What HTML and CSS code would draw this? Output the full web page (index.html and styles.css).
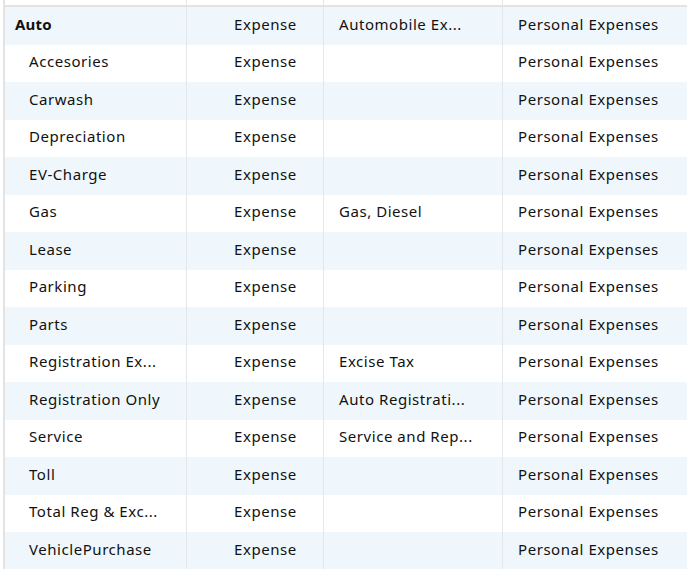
FILE: index.html
```html
<!DOCTYPE html>
<html>
<head>
<meta charset="utf-8">
<link rel="stylesheet" href="styles.css">
</head>
<body>
<div class="grid">
  <div class="head"><div class="hc"></div><div class="hc"></div><div class="hc"></div><div class="hc last"></div></div>
  <div class="row alt"><div class="c c1 parent">Auto</div><div class="c c2">Expense</div><div class="c c3">Automobile Ex...</div><div class="c c4">Personal Expenses</div></div>
  <div class="row"><div class="c c1">Accesories</div><div class="c c2">Expense</div><div class="c c3"></div><div class="c c4">Personal Expenses</div></div>
  <div class="row alt"><div class="c c1">Carwash</div><div class="c c2">Expense</div><div class="c c3"></div><div class="c c4">Personal Expenses</div></div>
  <div class="row"><div class="c c1">Depreciation</div><div class="c c2">Expense</div><div class="c c3"></div><div class="c c4">Personal Expenses</div></div>
  <div class="row alt"><div class="c c1">EV-Charge</div><div class="c c2">Expense</div><div class="c c3"></div><div class="c c4">Personal Expenses</div></div>
  <div class="row"><div class="c c1">Gas</div><div class="c c2">Expense</div><div class="c c3">Gas, Diesel</div><div class="c c4">Personal Expenses</div></div>
  <div class="row alt"><div class="c c1">Lease</div><div class="c c2">Expense</div><div class="c c3"></div><div class="c c4">Personal Expenses</div></div>
  <div class="row"><div class="c c1">Parking</div><div class="c c2">Expense</div><div class="c c3"></div><div class="c c4">Personal Expenses</div></div>
  <div class="row alt"><div class="c c1">Parts</div><div class="c c2">Expense</div><div class="c c3"></div><div class="c c4">Personal Expenses</div></div>
  <div class="row"><div class="c c1">Registration Ex...</div><div class="c c2">Expense</div><div class="c c3">Excise Tax</div><div class="c c4">Personal Expenses</div></div>
  <div class="row alt"><div class="c c1">Registration Only</div><div class="c c2">Expense</div><div class="c c3">Auto Registrati...</div><div class="c c4">Personal Expenses</div></div>
  <div class="row"><div class="c c1">Service</div><div class="c c2">Expense</div><div class="c c3">Service and Rep...</div><div class="c c4">Personal Expenses</div></div>
  <div class="row alt"><div class="c c1">Toll</div><div class="c c2">Expense</div><div class="c c3"></div><div class="c c4">Personal Expenses</div></div>
  <div class="row"><div class="c c1">Total Reg &amp; Exc...</div><div class="c c2">Expense</div><div class="c c3"></div><div class="c c4">Personal Expenses</div></div>
  <div class="row alt"><div class="c c1">VehiclePurchase</div><div class="c c2">Expense</div><div class="c c3"></div><div class="c c4">Personal Expenses</div></div>
</div>
</body>
</html>
```
FILE: styles.css
```css
html, body {
  margin: 0;
  padding: 0;
  background: #ffffff;
  overflow: hidden;
}
body {
  font-family: "Noto Sans", "Open Sans", sans-serif;
  font-size: 15px;
  letter-spacing: 0.55px;
  color: #111111;
}
.grid {
  margin-left: 3px;
  border-left: 2px solid #e3e3e3;
}
.head, .row {
  display: grid;
  grid-template-columns: 182px 137px 179px 1fr;
}
.head {
  height: 5px;
  border-bottom: 2px solid #e3e3e3;
}
.hc {
  border-right: 1px solid #e6e6e6;
}
.hc.last { border-right: 0; }
.row {
  height: 37.5px;
}
.row.alt {
  background: #eff7fc;
}
.c {
  display: flex;
  align-items: center;
  white-space: nowrap;
  overflow: hidden;
  padding-bottom: 4px;
  box-sizing: border-box;
  border-right: 1px solid #e6e6e6;
}
.c4 { border-right: 0; }
.c1 { padding-left: 24px; }
.c1.parent { padding-left: 10px; font-weight: bold; letter-spacing: 0.2px; }
.c2 { padding-left: 47px; }
.c3 { padding-left: 15px; }
.c4 { padding-left: 15px; }
```
